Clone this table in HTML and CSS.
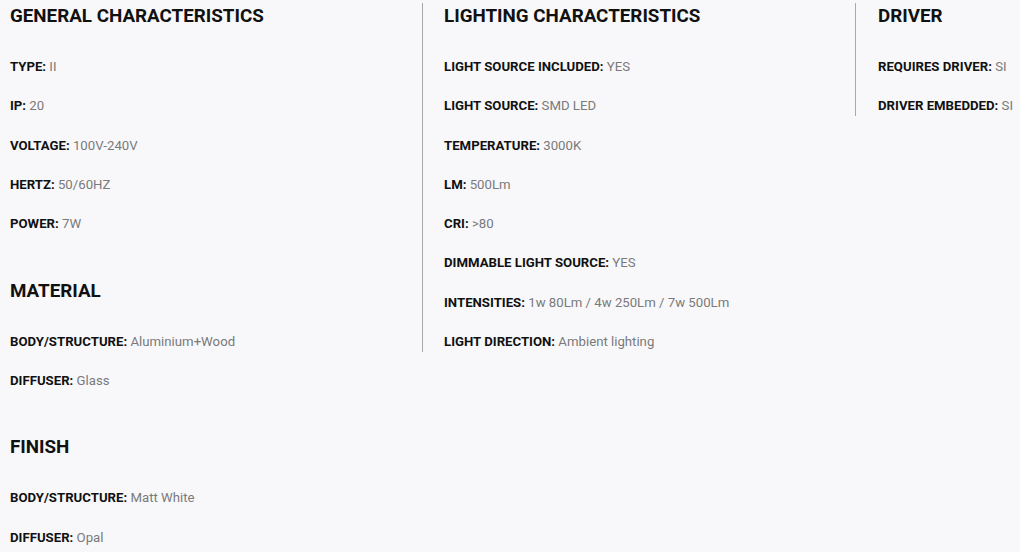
FILE: index.html
```html
<!DOCTYPE html>
<html lang="en">
<head>
<meta charset="utf-8">
<link rel="stylesheet" href="styles.css">
</head>
<body>
<div class="specs">
  <div class="col col-first">
    <section class="group">
      <h3 class="title">GENERAL CHARACTERISTICS</h3>
      <ul class="rows">
        <li><b>TYPE:</b> II</li>
        <li><b>IP:</b> 20</li>
        <li><b>VOLTAGE:</b> 100V-240V</li>
        <li><b>HERTZ:</b> 50/60HZ</li>
        <li><b>POWER:</b> 7W</li>
      </ul>
    </section>
    <section class="group">
      <h3 class="title">MATERIAL</h3>
      <ul class="rows">
        <li><b>BODY/STRUCTURE:</b> Aluminium+Wood</li>
        <li><b>DIFFUSER:</b> Glass</li>
      </ul>
    </section>
    <section class="group">
      <h3 class="title">FINISH</h3>
      <ul class="rows">
        <li><b>BODY/STRUCTURE:</b> Matt White</li>
        <li><b>DIFFUSER:</b> Opal</li>
      </ul>
    </section>
  </div>
  <div class="col col-mid">
    <section class="group">
      <h3 class="title">LIGHTING CHARACTERISTICS</h3>
      <ul class="rows">
        <li><b>LIGHT SOURCE INCLUDED:</b> YES</li>
        <li><b>LIGHT SOURCE:</b> SMD LED</li>
        <li><b>TEMPERATURE:</b> 3000K</li>
        <li><b>LM:</b> 500Lm</li>
        <li><b>CRI:</b> &gt;80</li>
        <li><b>DIMMABLE LIGHT SOURCE:</b> YES</li>
        <li><b>INTENSITIES:</b> 1w 80Lm / 4w 250Lm / 7w 500Lm</li>
        <li><b>LIGHT DIRECTION:</b> Ambient lighting</li>
      </ul>
    </section>
  </div>
  <div class="col col-last">
    <section class="group">
      <h3 class="title">DRIVER</h3>
      <ul class="rows">
        <li><b>REQUIRES DRIVER:</b> SI</li>
        <li><b>DRIVER EMBEDDED:</b> SI</li>
      </ul>
    </section>
  </div>
</div>
</body>
</html>
```
FILE: styles.css
```css
html, body {
  margin: 0;
  padding: 0;
  background: #f8f8fa;
}
body {
  font-family: Roboto, "Liberation Sans", sans-serif;
  padding-top: 4px;
  overflow: hidden;
}
.specs {
  display: grid;
  grid-template-columns: 422px 433px 1fr;
  align-items: start;
  margin-top: -1px;
}
.col {
  display: flex;
  flex-direction: column;
  gap: 44.5px;
  padding-top: 1px;
}
.col-first {
  padding-left: 10px;
}
.col-mid,
.col-last {
  border-left: 1px solid #a8a8a8;
  padding-left: 21px;
}
.col-last {
  padding-left: 22px;
}
.title {
  margin: 0 0 29px;
  font-size: 18.8px;
  line-height: 24px;
  font-weight: 700;
  color: #111;
}
.rows {
  list-style: none;
  margin: 0;
  padding: 0;
  display: flex;
  flex-direction: column;
  gap: 19.25px;
}
.rows li {
  font-size: 13.2px;
  line-height: 20px;
  color: #7a7a7a;
  white-space: nowrap;
}
.rows b {
  font-weight: 700;
  color: #111;
}
```
